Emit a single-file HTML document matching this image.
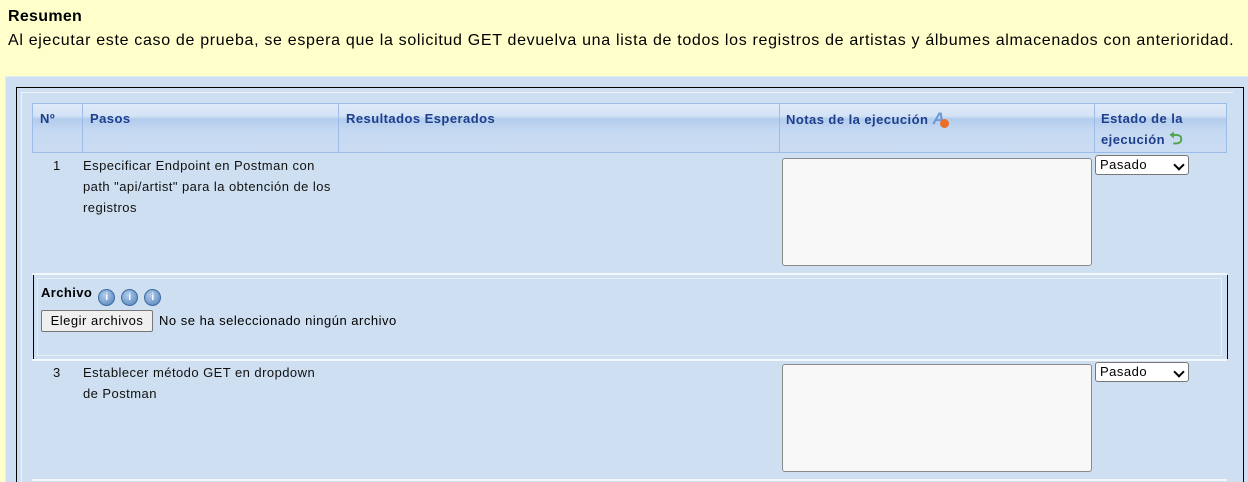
<!DOCTYPE html>
<html><head><meta charset="utf-8"><style>
html,body{margin:0;width:1248px;height:482px;overflow:hidden}
body{background:#ffffcc;font-family:"Liberation Sans",Arial,sans-serif;position:relative}
.a{position:absolute}
.t{font-size:13px;color:#111;line-height:21px;letter-spacing:0.45px}
.h{font-size:13px;font-weight:bold;color:#1d3f8c;line-height:20px;letter-spacing:0.45px}
.ta{background:#f8f8f8;border:1px solid #8a8a8a;border-radius:3px}
.sel{background:#fff;border:1px solid #777;border-radius:3px;font-size:13px;line-height:18px;padding-left:4px;box-sizing:border-box;letter-spacing:0.5px}
.chev{position:absolute;right:5px;top:5px;width:6px;height:6px;border-right:2px solid #000;border-bottom:2px solid #000;transform:rotate(45deg)}
.ic{display:inline-block;width:17px;height:17px;border-radius:50%;background:radial-gradient(circle at 40% 35%,#b3cdec,#4d7fb9);border:1px solid #3c6aa3;box-sizing:border-box;color:#fff;font-size:10px;font-weight:bold;text-align:center;line-height:15px;vertical-align:-3px;margin-left:6px;letter-spacing:0}
</style></head><body>
<div class="a" style="left:8px;top:8px;font-size:16px;font-weight:bold;color:#000;letter-spacing:0.3px">Resumen</div>
<div class="a" style="left:8px;top:32px;font-size:16px;color:#000;letter-spacing:0.68px;white-space:nowrap">Al ejecutar este caso de prueba, se espera que la solicitud GET devuelva una lista de todos los registros de artistas y álbumes almacenados con anterioridad.</div>
<div class="a" style="left:5px;top:76px;width:1243px;height:406px;background:#cddff0;border-top:1px solid #e4ecf6;border-left:1px solid #e4ecf6;box-sizing:border-box"></div>
<div class="a" style="left:16px;top:87px;width:1228px;height:395px;border-left:1px solid #000;border-top:1px solid #000;border-right:1px solid #000;box-sizing:border-box"></div>
<div class="a" style="left:21px;top:92px;width:1212px;height:390px;border-left:1px solid #eef3fa;border-top:1px solid #eef3fa;box-sizing:border-box"></div>
<div class="a" style="left:32px;top:103px;width:1195px;height:50px;background:linear-gradient(#dfeaf8 0,#d3e2f5 12px,#b3cced 15px,#c6d9f2 28px,#cbdcf2 50px);border:1px solid #9bbce6;box-sizing:border-box"></div>
<div class="a" style="left:82px;top:103px;width:1px;height:50px;background:#9bbce6"></div>
<div class="a" style="left:338px;top:103px;width:1px;height:50px;background:#9bbce6"></div>
<div class="a" style="left:779px;top:103px;width:1px;height:50px;background:#9bbce6"></div>
<div class="a" style="left:1094px;top:103px;width:1px;height:50px;background:#9bbce6"></div>
<div class="a h" style="left:40px;top:109px">Nº</div>
<div class="a h" style="left:90px;top:109px">Pasos</div>
<div class="a h" style="left:346px;top:109px">Resultados Esperados</div>
<div class="a h" style="left:786px;top:109px">Notas de la ejecución <span style="color:#6d98d8;font-style:italic;font-size:17px">A</span><span style="display:inline-block;width:9px;height:9px;border-radius:50%;background:#e8702a;margin-left:-5px;vertical-align:-4px"></span></div>
<div class="a h" style="left:1101px;top:109px;line-height:20px">Estado de la<br>ejecución <span style="color:#4ca548;font-size:17px;font-weight:bold">&#x2B8C;</span></div>
<div class="a t" style="left:53px;top:155px">1</div>
<div class="a t" style="left:83px;top:155px;width:270px">Especificar Endpoint en Postman con<br>path "api/artist" para la obtención de los<br>registros</div>
<div class="a ta" style="left:782px;top:158px;width:308px;height:106px"></div>
<div class="a sel" style="left:1095px;top:155px;width:94px;height:20px">Pasado<span class="chev"></span></div>
<div class="a" style="left:32px;top:273px;width:1195px;height:2px;background:#f4f8fc"></div>
<div class="a" style="left:33px;top:275px;width:1195px;height:84px;border-left:1px solid #000;border-right:1px solid #000;box-sizing:border-box"></div>
<div class="a" style="left:37px;top:278px;width:1185px;height:78px;border:1px solid #e6eef7;box-sizing:border-box"></div>
<div class="a" style="left:41px;top:285px;font-size:13px;font-weight:bold;letter-spacing:0.4px">Archivo<span class="ic">i</span><span class="ic">i</span><span class="ic">i</span></div>
<div class="a" style="left:41px;top:310px;width:112px;height:22px;border:1px solid #777;border-radius:2px;background:#efefef;box-sizing:border-box;font-size:13px;text-align:center;line-height:20px;letter-spacing:0.5px">Elegir archivos</div>
<div class="a" style="left:159px;top:313px;font-size:13px;letter-spacing:0.5px">No se ha seleccionado ningún archivo</div>
<div class="a" style="left:32px;top:359px;width:1195px;height:2px;background:#f4f8fc"></div>
<div class="a t" style="left:53px;top:362px">3</div>
<div class="a t" style="left:83px;top:362px;width:270px">Establecer método GET en dropdown<br>de Postman</div>
<div class="a ta" style="left:782px;top:364px;width:308px;height:106px"></div>
<div class="a sel" style="left:1095px;top:362px;width:94px;height:20px">Pasado<span class="chev"></span></div>
<div class="a" style="left:32px;top:479px;width:1195px;height:2px;background:#f4f8fc"></div>
</body></html>
